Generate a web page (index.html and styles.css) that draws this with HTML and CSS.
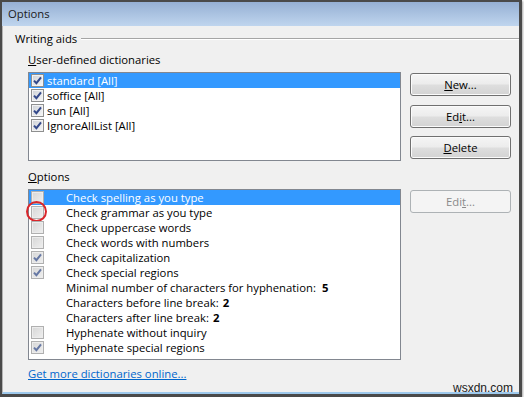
FILE: index.html
```html
<!DOCTYPE html>
<html lang="en">
<head>
    <meta charset="UTF-8">
    <title>Options</title>
    <link rel="stylesheet" href="styles.css">
</head>
<body>
    <div class="window">
        <div class="titlebar">Options</div>
        <div class="client">
            <div class="group-head"><span>Writing aids</span></div>
            <div class="group">
                <div class="label"><u>U</u>ser-defined dictionaries</div>
                <div class="pane">
                    <ul class="list dicts">
                        <li class="sel"><span class="cb"><svg viewBox="0 0 11 11"><path d="M2 5.6l2.4 2.6L9 2.4"/></svg></span>standard [All]</li>
                        <li><span class="cb"><svg viewBox="0 0 11 11"><path d="M2 5.6l2.4 2.6L9 2.4"/></svg></span>soffice [All]</li>
                        <li><span class="cb"><svg viewBox="0 0 11 11"><path d="M2 5.6l2.4 2.6L9 2.4"/></svg></span>sun [All]</li>
                        <li><span class="cb"><svg viewBox="0 0 11 11"><path d="M2 5.6l2.4 2.6L9 2.4"/></svg></span>IgnoreAllList [All]</li>
                    </ul>
                    <div class="buttons">
                        <button><u>N</u>ew...</button>
                        <button>Ed<u>i</u>t...</button>
                        <button><u>D</u>elete</button>
                    </div>
                </div>

                <div class="label second"><u>O</u>ptions</div>
                <div class="pane">
                    <ul class="list options">
                        <li class="sel"><span class="cb"></span>Check spelling as you type</li>
                        <li><span class="cb circled"></span>Check grammar as you type</li>
                        <li><span class="cb"></span>Check uppercase words</li>
                        <li><span class="cb"></span>Check words with numbers</li>
                        <li><span class="cb"><svg viewBox="0 0 11 11"><path d="M2 5.6l2.4 2.6L9 2.4"/></svg></span>Check capitalization</li>
                        <li><span class="cb"><svg viewBox="0 0 11 11"><path d="M2 5.6l2.4 2.6L9 2.4"/></svg></span>Check special regions</li>
                        <li class="nocb">Minimal number of characters for hyphenation: <b class="wide">5</b></li>
                        <li class="nocb">Characters before line break: <b>2</b></li>
                        <li class="nocb">Characters after line break: <b>2</b></li>
                        <li><span class="cb"></span>Hyphenate without inquiry</li>
                        <li><span class="cb"><svg viewBox="0 0 11 11"><path d="M2 5.6l2.4 2.6L9 2.4"/></svg></span>Hyphenate special regions</li>
                    </ul>
                    <div class="buttons">
                        <button disabled>Edi<u>t</u>...</button>
                    </div>
                </div>

                <a class="more" href="#">Get more dictionaries online...</a>
            </div>
            <span class="watermark">wsxdn.com</span>
        </div>
    </div>
</body>
</html>
```

FILE: styles.css
```css
body {
    margin: 0;
    background: #fff;
    font-family: 'Open Sans', 'Noto Sans', sans-serif;
    font-size: 11.3px;
    color: #000;
}
.window {
    width: 517px;
    height: 392px;
    border-style: solid;
    border-color: #4a4a4a;
    border-width: 2px 3px 3px 2px;
    box-shadow: 1px 1px 2px rgba(0, 0, 0, 0.35);
}
.titlebar {
    height: 24px;
    line-height: 24px;
    padding-left: 6px;
    background: linear-gradient(#96b0d4, #bfd5ee);
    color: #1b1b1b;
}
.client {
    position: relative;
    box-sizing: border-box;
    height: 368px;
    padding: 5px 0 0 12px;
    background: #f0f0f0;
    border-left: 1px solid #b4b4b4;
    border-bottom: 2px solid #9ec9ec;
}
.group-head {
    display: flex;
    align-items: center;
    gap: 4px;
    line-height: 15px;
}
.group-head::after {
    content: "";
    flex: 1;
    border-top: 1px solid #a5a5a5;
    border-bottom: 1px solid #fff;
}
.group {
    padding-left: 13px;
}
.label {
    line-height: 15px;
    margin: 6px 0 5px;
}
.label.second {
    margin-top: 8px;
}
.pane {
    display: grid;
    grid-template-columns: 373px 101px;
    column-gap: 9px;
    align-items: start;
}
.list {
    margin: 0;
    padding: 0;
    list-style: none;
    background: #fff;
    border: 1px solid #828790;
    box-sizing: border-box;
    height: 89px;
}
.list.options {
    height: 171px;
}
.list li {
    height: 15px;
    display: flex;
    align-items: center;
    white-space: nowrap;
    padding-left: 2px;
}
.list li.sel {
    background: #3399ff;
    color: #fff;
}
.cb {
    position: relative;
    flex: none;
    width: 13px;
    height: 13px;
    box-sizing: border-box;
    margin-right: 3px;
    border: 1px solid #8e8f8f;
    background: linear-gradient(135deg, #cdd1d6, #f7f7f7);
    box-shadow: inset 0 0 0 1px #f3f3f3;
}
.cb svg {
    display: block;
    width: 11px;
    height: 11px;
    fill: none;
    stroke: #34498a;
    stroke-width: 2;
}
.options .cb {
    margin-right: 22px;
    border-color: #b0b0b0;
    background: linear-gradient(135deg, #d6d6d6, #efefef);
    box-shadow: inset 0 0 0 1px #ececec;
}
.options .cb svg {
    stroke: #6678a4;
}
.options li.nocb {
    padding-left: 37px;
}
.list b {
    margin-left: 4px;
}
.list b.wide {
    margin-left: 6px;
}
.circled::after {
    content: "";
    position: absolute;
    left: -6px;
    top: -6px;
    width: 21px;
    height: 21px;
    box-sizing: border-box;
    border: 2px solid #d9262b;
    border-radius: 50%;
}
.buttons {
    display: flex;
    flex-direction: column;
    gap: 8.5px;
    padding-top: 1px;
}
button {
    height: 23px;
    padding: 0;
    font: inherit;
    color: #000;
    border: 1px solid #707070;
    border-radius: 3px;
    background: linear-gradient(#f5f5f5 0%, #ececec 48%, #dedede 52%, #d3d3d3 100%);
    box-shadow: inset 0 0 0 1px #fbfbfb;
}
button:disabled {
    color: #8a8a8a;
    border-color: #adb2b5;
    background: #f4f4f4;
    box-shadow: none;
}
.more {
    display: inline-block;
    margin-top: 6px;
    line-height: 15px;
    color: #0066cc;
}
.watermark {
    position: absolute;
    right: 6px;
    bottom: -3px;
    font-family: 'Liberation Sans', sans-serif;
    font-size: 12px;
    line-height: 14px;
    color: #1a1a1a;
}
```
